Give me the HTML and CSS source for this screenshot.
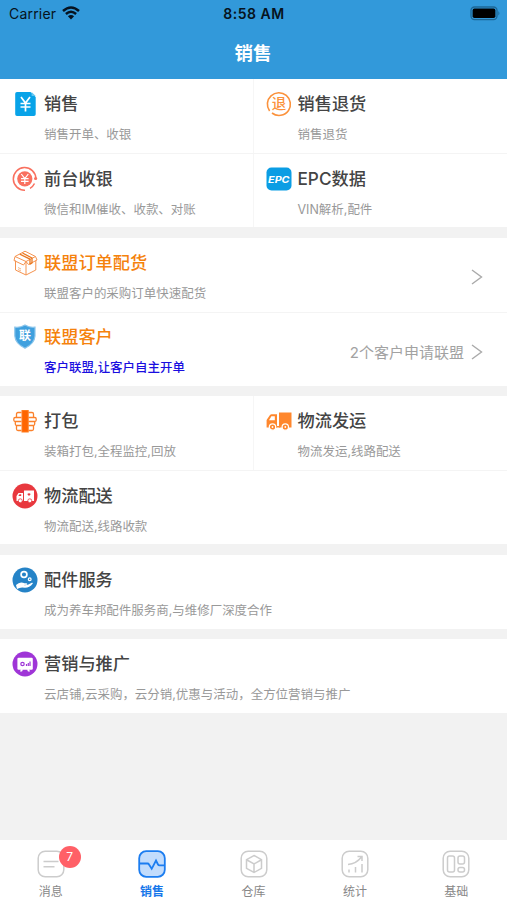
FILE: index.html
```html
<!DOCTYPE html>
<html lang="zh-CN">
<head>
<meta charset="utf-8">
<title>销售</title>
<link rel="stylesheet" href="styles.css">
</head>
<body>
<div class="app">
  <header class="header">
    <div class="status">
      <div class="carrier"><span>Carrier</span>
        <svg width="18" height="14" viewBox="0 0 18 14" fill="none" stroke="#061320" stroke-width="2.5"><path d="M1 5Q9-2 17 5M3.9 8Q9 3.6 14.1 8"/><path d="M9 13.6 5.9 10.3Q9 7.8 12.1 10.3Z" fill="#061320" stroke="none"/></svg>
      </div>
      <div class="time">8:58 AM</div>
      <div class="battery"><svg width="31" height="15" viewBox="0 0 31 15"><rect x="1" y="1" width="26" height="12.6" rx="3.5" fill="none" stroke="#1d6796" stroke-width="1.3"/><rect x="2.6" y="2.6" width="22.8" height="9.4" rx="1.8"/><path d="M28.4 5v4.6q2-2.3 0-4.6z" fill="#1d6796"/></svg></div>
    </div>
    <h1 class="page-title">销售</h1>
  </header>

  <main class="content">
    <section class="group">
      <div class="row">
        <div class="cell">
          <svg class="icon" viewBox="0 0 26 26"><path d="M4 1H18.500L23.700 6V23.200a1.800 1.800 0 0 1-1.800 1.800H5a1.800 1.800 0 0 1-1.800-1.800V2.800A1.800 1.800 0 0 1 5 1z" fill="#08a3e8"/><path d="M19.600 1l4.100 4h-4.100z" fill="#62c6f2"/><path d="M9 6l4.500 6L18 6M8.500 12.500h10M8.500 16h10M13.500 12v8.500" fill="none" stroke="#fff" stroke-width="1.700"/></svg>
          <div class="text"><h2>销售</h2><p>销售开单、收银</p></div>
        </div>
        <div class="cell">
          <svg class="icon" viewBox="0 0 26 26"><g fill="none" stroke="#fb923c" stroke-width="1.600"><path d="M3.600 20A11.500 11.500 0 1 1 22.500 19.500M6 22A11.500 11.500 0 0 0 22.500 19.500"/></g><text class="return-mark" x="13" y="18.300" text-anchor="middle">退</text></svg>
          <div class="text"><h2>销售退货</h2><p>销售退货</p></div>
        </div>
      </div>
      <div class="row">
        <div class="cell">
          <svg class="icon" viewBox="0 0 26 26"><g fill="none" stroke="#f9705f" stroke-width="1.500"><path d="M13 24.200A11.300 11.300 0 1 1 23.900 12.500"/><path d="M22.500 17.500A10.500 10.500 0 0 1 18 22.300"/></g><circle cx="12.800" cy="12.800" r="7.600" fill="#f9705f"/><circle cx="23.600" cy="12.500" r="1.600" fill="#f9705f"/><path d="M9.300 8l3.500 4.600L16.300 8M9 12.700h7.600M9 15.300h7.600M12.800 12.500v5.500" fill="none" stroke="#fff" stroke-width="1.200"/></svg>
          <div class="text"><h2>前台收银</h2><p>微信和IM催收、收款、对账</p></div>
        </div>
        <div class="cell">
          <svg class="icon" viewBox="0 0 26 26"><rect x=".5" y="1.500" width="25" height="23" rx="5" fill="#0b9de4"/><text class="epc-mark" x="12.800" y="16.800" text-anchor="middle" textLength="21.500" lengthAdjust="spacingAndGlyphs">EPC</text></svg>
          <div class="text"><h2>EPC数据</h2><p>VIN解析,配件</p></div>
        </div>
      </div>
    </section>

    <section class="group">
      <div class="row">
        <div class="cell accent">
          <svg class="icon" viewBox="0 0 26 26" fill="none" stroke="#f5934f" stroke-width="1" stroke-linejoin="round"><path d="M13 1.200 23.500 6.500 14 11.500 3 6.500zM3.500 10.500v9.500L14 25 23.800 20V10.500M14 11.500V25"/><path d="M3 6.500 2 10.500l9.500 4.500L14 11.500l2.500 3 8.500-4.500-1.500-3.500"/><path d="M7.800 4.200l10.200 5v5l2-1.200V8L10.500 3" stroke="#e9771f" stroke-width="1.300"/><path d="M6 17.500l3 1.500M6 19.500l3 1.500" stroke-width=".7"/></svg>
          <div class="text"><h2>联盟订单配货</h2><p>联盟客户的采购订单快速配货</p></div>
          <div class="more"><svg class="chevron" viewBox="0 0 12 16"><path d="M1 1 10.500 8 1 15"/></svg></div>
        </div>
      </div>
      <div class="row">
        <div class="cell accent notice">
          <svg class="icon" viewBox="0 0 26 26"><path d="M13 1Q18 4 23 3.200V12Q22.500 19.500 13 24.300 3.300 19.500 2.800 12V3.200Q8 4 13 1z" fill="#3fa0de" stroke="#8bc5eb" stroke-width="1.200"/><text class="shield-mark" x="12.900" y="16.200" text-anchor="middle">联</text></svg>
          <div class="text"><h2>联盟客户</h2><p>客户联盟,让客户自主开单</p></div>
          <div class="more"><span>2个客户申请联盟</span><svg class="chevron" viewBox="0 0 12 16"><path d="M1 1 10.500 8 1 15"/></svg></div>
        </div>
      </div>
    </section>

    <section class="group">
      <div class="row">
        <div class="cell">
          <svg class="icon" viewBox="0 0 26 26" fill="none" stroke="#fb812b" stroke-width="1.300"><path d="M9.500 4.500H6Q4.500 4.500 4.500 6v3.500M4.500 17.500V21q0 1.500 1.500 1.500h3.500M16.500 4.500H20q1.500 0 1.500 1.500v3.500M21.500 17.500V21q0 1.500-1.500 1.500h-3.500M9.500 9.500H3.200q-1.400 0-1.400 1.500v1q0 1.500 1.500 1.500h6.200M3.300 13.500v2.500q0 1.500 1.500 1.500h4.700M16.500 9.500h6.300q1.400 0 1.400 1.500v1q0 1.500-1.500 1.500h-6.200M22.700 13.500v2.500q0 1.500-1.500 1.500h-4.700"/><rect x="10" y="2.500" width="6.200" height="21.500" fill="#ff6500" stroke="#ff7d20" stroke-width="1"/></svg>
          <div class="text"><h2>打包</h2><p>装箱打包,全程监控,回放</p></div>
        </div>
        <div class="cell">
          <svg class="icon" viewBox="0 0 26 26"><path d="M13 4.500h12.500v15H13z" fill="#ff872d"/><path d="M.6 19.500V12L4 7q.6-.8 1.500-.8H11v13.300z" fill="#ff872d"/><path d="M3 12.300 5.400 8.300H8.800v4z" fill="#fff"/><path d="M10 18h4v1.500h-4z" fill="#ff872d"/><g fill="#ff872d" stroke="#fff" stroke-width="1.200"><circle cx="6.500" cy="19" r="3.200"/><circle cx="19.300" cy="19" r="3.200"/></g><circle cx="6.500" cy="19" r=".9" fill="#fff"/><circle cx="19.300" cy="19" r=".9" fill="#fff"/></svg>
          <div class="text"><h2>物流发运</h2><p>物流发运,线路配送</p></div>
        </div>
      </div>
      <div class="row">
        <div class="cell">
          <svg class="icon" viewBox="0 0 26 26"><circle cx="13" cy="13" r="12.500" fill="#e8383e"/><path d="M12 7.500h10v10.500H12zM4.500 18V13L6.500 10H11v8z" fill="#fff"/><path d="M6.300 12.900l1.200-1.700h1.700v1.700zM15.300 11q1.700-1.500 3.400 0-1.700 3.500-3.400 0" fill="#e8383e"/><g fill="#fff" stroke="#e8383e" stroke-width=".8"><circle cx="8.300" cy="17.800" r="2"/><circle cx="17.800" cy="17.800" r="2"/></g></svg>
          <div class="text"><h2>物流配送</h2><p>物流配送,线路收款</p></div>
        </div>
      </div>
    </section>

    <section class="group">
      <div class="row">
        <div class="cell">
          <svg class="icon" viewBox="0 0 26 26"><circle cx="13" cy="13" r="12.500" fill="#2583c7"/><g fill="none" stroke="#fff"><circle cx="12" cy="7.500" r="2.900" stroke-width="1.700"/><circle cx="17.700" cy="12.300" r="1.400" stroke-width="1.200"/></g><path d="M4 18Q7.500 14.500 11 15.700q1.500.7 3.500.6 1.300.4.300 1.400l-3 .4q4 .5 8-2.300 1.300-.3 1 .7-3.300 4.300-7.800 4.300-3.500-.8-5.500.2L5 22z" fill="#fff"/></svg>
          <div class="text"><h2>配件服务</h2><p>成为养车邦配件服务商,与维修厂深度合作</p></div>
        </div>
      </div>
    </section>

    <section class="group">
      <div class="row">
        <div class="cell">
          <svg class="icon" viewBox="0 0 26 26"><circle cx="13" cy="13" r="12.500" fill="#9f35d7"/><rect x="5.400" y="6.700" width="15.400" height="12" rx="1.200" fill="#fff"/><path d="M9 18l-1 2.500h2l1-2M17 18l1 2.500h-2l-1-2" fill="#fff"/><g fill="none" stroke="#9f35d7" stroke-width="1.200"><circle cx="10.500" cy="13" r="1.700"/><path d="M14.500 15v-2M16.300 15v-3M18 15V10.500"/></g></svg>
          <div class="text"><h2>营销与推广</h2><p>云店铺,云采购，云分销,优惠与活动，全方位营销与推广</p></div>
        </div>
      </div>
    </section>
  </main>

  <nav class="tabs">
    <div class="tab">
      <div class="tab-icon"><svg viewBox="0 0 28 28"><rect x="1.200" y="1.200" width="25.600" height="25.600" rx="7"/><path d="M6.500 11.500h15M6.500 16.800H17.500"/></svg><span class="badge">7</span></div>
      <span>消息</span>
    </div>
    <div class="tab active">
      <div class="tab-icon"><svg viewBox="0 0 28 28"><rect x="1.200" y="1.200" width="25.600" height="25.600" rx="7" fill="#c2dcfc"/><path d="M1.500 13.500H9.500q1 0 1.500 1l2.700 4.300L18 10.500l2 4q.4.800 1.500.8h5"/></svg></div>
      <span>销售</span>
    </div>
    <div class="tab">
      <div class="tab-icon"><svg viewBox="0 0 28 28"><rect x="1.200" y="1.200" width="25.600" height="25.600" rx="7"/><path d="M14 5.500 21.500 9.700v8.600L14 22.500l-7.500-4.200V9.700zM7 10l7 4 7-4M14 14v8"/></svg></div>
      <span>仓库</span>
    </div>
    <div class="tab">
      <div class="tab-icon"><svg viewBox="0 0 28 28"><rect x="1.200" y="1.200" width="25.600" height="25.600" rx="7"/><path d="M7 14.500q8-.5 13.500-7.500M16.500 6.500h4.500V11M8 19.500V22.500M14.500 17v5.500M21 14v8.500"/></svg></div>
      <span>统计</span>
    </div>
    <div class="tab">
      <div class="tab-icon"><svg viewBox="0 0 28 28"><rect x="1.200" y="1.200" width="25.600" height="25.600" rx="7"/><rect x="5.500" y="6" width="7" height="16" rx="2"/><rect x="16" y="6" width="6.500" height="8" rx="2"/><rect x="16" y="17.500" width="6.500" height="4.500" rx="2"/></svg></div>
      <span>基础</span>
    </div>
  </nav>
</div>
</body>
</html>
```
FILE: styles.css
```css
* { box-sizing: border-box; }
body {
  margin: 0;
  background: #f2f2f2;
  font-family: Inter, "Noto Sans CJK SC", sans-serif;
  color: #444;
}
h1, h2, p { margin: 0; }
svg { display: block; flex: none; }

.app { display: flex; flex-direction: column; height: 900px; }

.header { height: 79.300px; background: #3299da; }
.status {
  display: grid;
  grid-template-columns: 1fr auto 1fr;
  align-items: center;
  height: 27px;
  padding: 0 8px 0 9px;
  color: #061320;
  font-size: 14px;
}
.carrier { display: flex; align-items: center; gap: 6px; letter-spacing: 0.2px; }
.carrier svg { margin-top: -2px; }
.time { font-weight: 600; letter-spacing: 0.500px; }
.battery { display: flex; justify-content: flex-end; margin-right: -2px; }
.page-title {
  height: 52px;
  padding-right: 1px;
  color: #fff;
  font-size: 18.500px;
  font-weight: 700;
  line-height: 52px;
  text-align: center;
}

.content { flex: 1; display: flex; flex-direction: column; gap: 10.500px; }
.group { background: #fff; }
.row { display: flex; height: 74px; }
.row + .row { border-top: 1px solid #f4f4f4; }
.row + .row .cell { padding-top: 11.500px; }
.cell { flex: 1; display: flex; padding: 12px 24px 0 12px; min-width: 0; }
.cell + .cell { margin-left: -1px; border-left: 1px solid #f6f6f6; }
.icon { width: 26px; height: 26px; margin-right: 6px; }
.text { white-space: nowrap; }
.text h2 {
  font-size: 17.200px;
  font-weight: 500;
  line-height: 25px;
}
.text p {
  margin-top: 11.200px;
  color: #999;
  font-size: 12.480px;
  line-height: 16px;
}
.accent h2 { color: #f5820c; }
.notice p { color: #1a0ee0; font-weight: 500; }
.more {
  display: flex;
  align-items: center;
  gap: 7px;
  height: 55px;
  margin-left: auto;
  color: #a2a2a2;
  font-size: 15px;
}
.chevron { width: 12px; height: 16px; fill: none; stroke: #aaa; stroke-width: 1.400; }

.return-mark { fill: #fb923c; font-size: 14.500px; font-weight: 500; }
.epc-mark { fill: #fff; font-size: 9px; font-weight: 700; font-style: italic; }
.shield-mark { fill: #fff; font-size: 12px; font-weight: 700; }

.tabs { display: flex; height: 60px; background: #fff; }
.tab {
  flex: 1;
  display: flex;
  flex-direction: column;
  align-items: center;
  padding-top: 9.500px;
  color: #888;
  font-size: 12px;
  line-height: 16px;
}
.tab-icon { position: relative; margin-bottom: 6px; }
.tab-icon svg { width: 28px; height: 28px; fill: none; stroke: #ccc; stroke-width: 1.500; }
.tab.active { color: #1677ea; font-weight: 700; }
.tab.active svg { stroke: #1c7df0; stroke-width: 1.800; }
.badge {
  position: absolute;
  left: 22px;
  top: -3.500px;
  width: 22px;
  height: 22px;
  border-radius: 50%;
  background: #ff6067;
  color: #fff;
  line-height: 22px;
  text-align: center;
}
```
